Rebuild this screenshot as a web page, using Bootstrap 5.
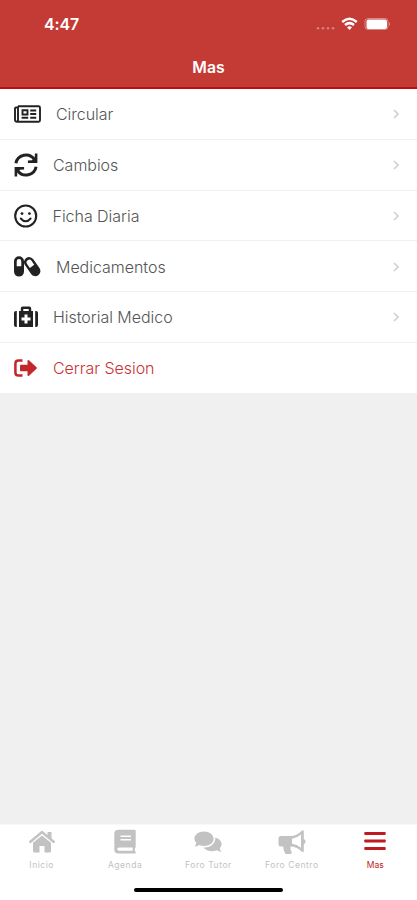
<!DOCTYPE html>
<html lang="es">
<head>
<meta charset="utf-8">
<meta name="viewport" content="width=device-width, initial-scale=1">
<title>Mas</title>
<link rel="stylesheet" href="https://cdn.jsdelivr.net/npm/bootstrap@5.3.0/dist/css/bootstrap.min.css">
<style>
body{font-family:Inter,"Liberation Sans",sans-serif;background:#f0f0f0;height:900px;overflow:hidden}
svg{display:block;flex:none}
.app-head{background:#c43a35;height:89px;border-bottom:2px solid #b90f10;color:#fff}
.status{height:48px;padding-left:44px;padding-right:27px}
.clock{font-size:16px;font-weight:600;line-height:48px;letter-spacing:-.1px}
.title{font-size:15.8px;font-weight:600;line-height:40px}
.menu .list-group-item{height:50.75px;padding:1px 17px 0 14px;border-color:#efefef;border-width:0 0 1px;color:#555;font-size:16px;font-weight:300;letter-spacing:-.03px}
.menu .list-group-item:last-child{height:50px;border-bottom:0}
.menu svg{color:#222}
.menu .chev{color:#cfcfd1}
.menu .leave,.menu .leave svg{color:#cb3032}
.menu .leave svg{color:#c4272a}
.tabs{height:76px;color:#c2c2c2;border-top:1px solid #f8f8f8}
.tabs a{color:inherit;width:83.4px;padding-top:4px;font-size:8.5px;line-height:12px;letter-spacing:.55px;white-space:nowrap}
.tabs svg{margin-bottom:4px}
.tabs .on{color:#be1b20}
.tabs .on{letter-spacing:.1px}
.homebar{width:149px;height:4px;background:#000;margin-bottom:8px}
</style>
<script src="https://cdn.jsdelivr.net/npm/bootstrap@5.3.0/dist/js/bootstrap.bundle.min.js"></script>
</head>
<body class="d-flex flex-column">
<header class="app-head">
  <div class="status d-flex align-items-center justify-content-between">
    <span class="clock">4:47</span>
    <svg width="74" height="16" viewBox="0 0 74 16" fill="#fff">
      <g opacity=".35"><circle cx="2" cy="12.3" r="1.300"/><circle cx="7" cy="12.3" r="1.300"/><circle cx="12" cy="12.3" r="1.300"/><circle cx="17" cy="12.3" r="1.300"/></g>
      <g fill="none" stroke="#fff" stroke-width="2.500"><path d="M26.2 6Q33.500 -.4 40.800 6"/><path d="M29 9Q33.500 5.200 38 9"/></g><path d="M31 11.200q2.500-2 5 0L33.500 14z"/>
      <rect x="49" y="2.500" width="23" height="11" rx="3" fill="none" stroke="#fff" stroke-opacity=".4"/><rect x="50.500" y="3.500" width="20.500" height="9.500" rx="2"/><path d="M73 6q1.500 2 0 4z" opacity=".6"/>
    </svg>
  </div>
  <div class="title text-center">Mas</div>
</header>
<main class="flex-grow-1">
  <div class="menu list-group list-group-flush">
    <a href="#" class="list-group-item d-flex align-items-center">
      <svg width="27" height="18" viewBox="0 0 27 18" fill="none" stroke="currentColor"><path d="M4 1.200H24.500Q26 1.200 26 2.700V15.300Q26 16.800 24.500 16.800H3Q1 16.800 1 14.800V3.500Q1 2.500 2 2.500H4M4 1.200V14.800Q4 16.800 2.800 16.800" stroke-width="1.900"/><path d="M8.500 5.300H13.500V9.500H8.500Z M7.600 12.700H14.200M16.200 5.500H22.200M16.200 9H22.200M16.200 12.700H22.200" stroke-width="1.900"/></svg>
      <span class="flex-grow-1" style="margin-left:15px">Circular</span>
      <svg class="chev" width="8" height="12" viewBox="0 0 8 12" fill="none" stroke="currentColor" stroke-width="1.600"><path d="M2 2L6 6L2 10"/></svg>
    </a>
    <a href="#" class="list-group-item d-flex align-items-center">
      <svg width="24" height="24" viewBox="0 0 24 24" fill="none" stroke="currentColor" stroke-width="3"><path d="M1.900 10.300A10.200 10.200 0 0 1 20.200 6.200M22.100 13.700A10.200 10.200 0 0 1 3.800 17.800"/><path d="M20.900 .5H23.400V9.900H13.900V7.600L18 7.200L20.700 4.500ZM3.100 23.500H.6V14.100H10.100V16.400L6 16.800L3.300 19.500Z" fill="currentColor" stroke="none"/></svg>
      <span class="flex-grow-1" style="margin-left:15px">Cambios</span>
      <svg class="chev" width="8" height="12" viewBox="0 0 8 12" fill="none" stroke="currentColor" stroke-width="1.600"><path d="M2 2L6 6L2 10"/></svg>
    </a>
    <a href="#" class="list-group-item d-flex align-items-center">
      <svg width="24" height="24" viewBox="0 0 24 24" fill="none" stroke="currentColor"><circle cx="11.700" cy="12" r="10.500" stroke-width="2.100"/><path d="M6.800 14.500Q11.700 20.200 16.600 14.500" stroke-width="2" stroke-linecap="round"/><g fill="currentColor" stroke="none"><circle cx="8" cy="9.600" r="1.400"/><circle cx="15.400" cy="9.600" r="1.400"/></g></svg>
      <span class="flex-grow-1" style="margin-left:14.500px">Ficha Diaria</span>
      <svg class="chev" width="8" height="12" viewBox="0 0 8 12" fill="none" stroke="currentColor" stroke-width="1.600"><path d="M2 2L6 6L2 10"/></svg>
    </a>
    <a href="#" class="list-group-item d-flex align-items-center">
      <svg width="27" height="21" viewBox="0 0 27 21"><path fill="currentColor" fill-rule="evenodd" d="M0 5.200A5 5 0 0 1 10 5.200V15.600A5 5 0 0 1 0 15.600ZM2.700 5.400V10.300H7.300V5.400A2.300 2.300 0 0 0 2.700 5.400Z"/><g transform="translate(18.200 10.600) rotate(-35)"><path fill="currentColor" fill-rule="evenodd" d="M-5.100 -5.400A5.100 5.100 0 0 1 5.100 -5.400V5.400A5.100 5.100 0 0 1 -5.100 5.400ZM-2.700 -5.100V-.3H2.700V-5.100A2.700 2.700 0 0 0 -2.700 -5.100Z"/></g></svg>
      <span class="flex-grow-1" style="margin-left:15px">Medicamentos</span>
      <svg class="chev" width="8" height="12" viewBox="0 0 8 12" fill="none" stroke="currentColor" stroke-width="1.600"><path d="M2 2L6 6L2 10"/></svg>
    </a>
    <a href="#" class="list-group-item d-flex align-items-center">
      <svg width="24" height="22" viewBox="0 0 24 22" fill="currentColor"><path d="M2 5H2.800V21H2Q0 21 0 19V7Q0 5 2 5ZM22 5H21.200V21H22Q24 21 24 19V7Q24 5 22 5Z"/><path fill-rule="evenodd" d="M5 5H6.800V2.500Q6.800 .5 8.800 .5H15.200Q17.200 .5 17.200 2.500V5H19V21H5ZM9.300 3V5H14.700V3ZM10.500 8.500V11.500H7.500V14.500H10.500V17.500H13.500V14.500H16.500V11.500H13.500V8.500Z"/></svg>
      <span class="flex-grow-1" style="margin-left:15px">Historial Medico</span>
      <svg class="chev" width="8" height="12" viewBox="0 0 8 12" fill="none" stroke="currentColor" stroke-width="1.600"><path d="M2 2L6 6L2 10"/></svg>
    </a>
    <a href="#" class="list-group-item leave d-flex align-items-center">
      <svg width="24" height="18" viewBox="0 0 24 18"><path d="M8.500 1.400H4.500Q1.400 1.400 1.400 4.500V13.500Q1.400 16.600 4.500 16.600H8.500" fill="none" stroke="currentColor" stroke-width="2.500"/><path fill="currentColor" d="M7 5.800H13.500V2Q13.500 .2 15 1.300L22.500 8.200Q23.400 9 22.500 9.800L15 16.700Q13.500 17.800 13.500 16V12.200H7Q6 12.200 6 11.200V6.800Q6 5.800 7 5.800Z"/></svg>
      <span class="flex-grow-1" style="margin-left:15px">Cerrar Sesion</span>
    </a>
  </div>
</main>
<footer class="bg-white">
  <nav class="tabs d-flex flex-column justify-content-between">
    <div class="d-flex">
      <a href="#" class="d-flex flex-column align-items-center text-decoration-none"><svg width="28" height="26" viewBox="0 0 28 26" fill="currentColor"><path d="M1.500 13.500L14 3L26.500 13.500" fill="none" stroke="currentColor" stroke-width="2.400"/><path d="M19.500 3H23.500V10L19.500 7ZM5 13.800L14 6.400L23 13.800V22Q23 23.500 21.500 23.500H16.500V17H11.500V23.500H6.500Q5 23.500 5 22Z"/></svg>Inicio</a>
      <a href="#" class="d-flex flex-column align-items-center text-decoration-none"><svg width="22" height="26" viewBox="0 0 22 26"><path fill="currentColor" fill-rule="evenodd" d="M4.500 .8H20.500Q21.700 .8 21.700 2V17.500Q21.700 18.500 21 19Q20.500 20.500 21 22Q21.700 22.500 21.700 23.500V24.500H4.500Q.3 24.500 .3 20.500V5Q.3 .8 4.500 .8ZM6.500 6.500V8H17V6.500ZM6.500 10V11.500H17V10ZM4.800 18.500Q3.300 18.500 3.300 20.100Q3.300 21.700 4.800 21.700H18.700V18.500Z"/></svg>Agenda</a>
      <a href="#" class="d-flex flex-column align-items-center text-decoration-none"><svg width="28" height="26" viewBox="0 0 28 26" fill="currentColor"><path d="M10 2.500C15.500 2.500 19.600 5.600 19.600 9.800S15.500 17 10 17Q7.500 17 5.300 16.100Q3.300 17.500 .5 17.400Q2 15.800 2.400 14Q.4 12 .4 9.800C.4 5.600 4.500 2.500 10 2.500Z"/><path d="M21.300 8.500C25 9.500 27.600 12 27.600 15Q27.600 17.500 25.800 19.400Q26.200 21.300 27.600 22.700Q24.800 22.700 22.700 21.300C17.500 23.300 11.800 21.700 9.500 18.500C16 19 21.500 15 21.300 8.500Z"/></svg>Foro Tutor</a>
      <a href="#" class="d-flex flex-column align-items-center text-decoration-none"><svg width="28" height="26" viewBox="0 0 28 26"><path fill="currentColor" fill-rule="evenodd" d="M3 7H13Q18.500 7 23.500 2Q25.800 .2 25.800 2.700V10Q27.600 10.800 27.600 12.600T25.800 15.200V21.700Q25.800 24.200 23.500 22.400Q18.500 17.500 12.500 17.500Q12 21 13.800 23Q13.800 25 12.500 25H7.500Q5 21.500 5.300 17.500H3Q.5 17.500 .5 15V9.500Q.5 7 3 7ZM14 9.800V14.700Q19 15.200 23 18.800V5.500Q19 9.200 14 9.800Z"/></svg>Foro Centro</a>
      <a href="#" class="on d-flex flex-column align-items-center text-decoration-none"><svg width="22" height="26" viewBox="0 0 22 26" fill="currentColor"><rect x=".3" y="3" width="21.400" height="3" rx=".8"/><rect x=".3" y="10.500" width="21.400" height="3" rx=".8"/><rect x=".3" y="18" width="21.400" height="3" rx=".8"/></svg>Mas</a>
    </div>
    <div class="homebar rounded-pill mx-auto"></div>
  </nav>
</footer>
</body>
</html>
